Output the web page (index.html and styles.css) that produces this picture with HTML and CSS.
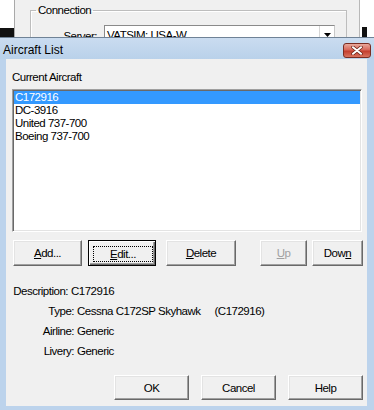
FILE: index.html
```html
<!DOCTYPE html>
<html lang="en">
<head>
    <meta charset="UTF-8">
    <meta name="viewport" content="width=device-width, initial-scale=1.0">
    <title>Aircraft List</title>
    <link rel="stylesheet" href="styles.css">
</head>
<body>
    <!-- window behind the dialog -->
    <div class="desk">
        <div class="desk-left"></div>
        <div class="bgwin">
            <fieldset class="group">
                <legend>Connection</legend>
                <div class="server-row">
                    <span class="server-label">Server:</span>
                    <div class="combo">
                        <span class="combo-text">VATSIM: USA-W</span>
                        <span class="combo-btn">
                            <svg width="7" height="4" viewBox="0 0 7 4"><path d="M0 0h7L3.5 4z" fill="#000"/></svg>
                        </span>
                    </div>
                </div>
            </fieldset>
        </div>
        <div class="desk-right"><span class="desk-block"></span></div>
    </div>

    <div class="dialog">
        <div class="titlebar">
            <span class="title">Aircraft List</span>
            <button class="close-btn" type="button">
                <svg width="12" height="9" viewBox="0 0 12 9">
                    <path d="M2 1.2L10 7.8M10 1.2L2 7.8" stroke="#6a2318" stroke-width="3.4" stroke-linecap="round"/>
                    <path d="M2 1.2L10 7.8M10 1.2L2 7.8" stroke="#fff" stroke-width="2" stroke-linecap="round"/>
                </svg>
            </button>
        </div>

        <div class="client">
            <div class="list-label">Current Aircraft</div>
            <div class="listbox">
                <div class="list-item selected">C172916</div>
                <div class="list-item">DC-3916</div>
                <div class="list-item">United 737-700</div>
                <div class="list-item">Boeing 737-700</div>
            </div>

            <div class="list-buttons">
                <button class="btn btn-add" type="button"><u>A</u>dd...</button>
                <button class="btn btn-edit is-default" type="button"><span class="focus-ring"><u>E</u>dit...</span></button>
                <button class="btn btn-delete" type="button"><u>D</u>elete</button>
                <span class="spacer"></span>
                <button class="btn btn-up" type="button" disabled><u>U</u>p</button>
                <button class="btn btn-down" type="button">Dow<u>n</u></button>
            </div>

            <div class="details">
                <div class="detail-row">
                    <span class="detail-label narrow">Description:</span>
                    <span class="detail-value">C172916</span>
                </div>
                <div class="detail-row">
                    <span class="detail-label">Type:</span>
                    <span class="detail-value">Cessna C172SP Skyhawk<span class="type-code">(C172916)</span></span>
                </div>
                <div class="detail-row">
                    <span class="detail-label">Airline:</span>
                    <span class="detail-value">Generic</span>
                </div>
                <div class="detail-row">
                    <span class="detail-label">Livery:</span>
                    <span class="detail-value">Generic</span>
                </div>
            </div>

            <div class="dialog-buttons">
                <button class="btn btn-main" type="button">OK</button>
                <button class="btn btn-main" type="button">Cancel</button>
                <button class="btn btn-main" type="button">Help</button>
            </div>
        </div>
    </div>
</body>
</html>
```

FILE: styles.css
```css
body {
    margin: 0;
    width: 374px;
    height: 410px;
    overflow: hidden;
    background: #fff;
    font-family: "Liberation Sans", Arial, sans-serif;
    font-size: 11.5px;
    letter-spacing: -0.5px;
    color: #000;
}

/* background window */
.desk {
    display: flex;
    height: 37px;
    overflow: hidden;
}

.desk-left {
    width: 14px;
    box-sizing: border-box;
    background: #fff;
    border-bottom: 9px solid #111;
}

.bgwin {
    width: 346px;
    box-sizing: border-box;
    background: #f0f0f0;
    border-left: 1px solid #a9a9a9;
    border-right: 1px solid #b8b8b8;
}

.desk-right {
    flex: 1;
    background: #fff;
    padding: 27px 0 0 2px;
}

.desk-block {
    display: block;
    width: 5px;
    height: 10px;
    background: #111;
}

.group {
    margin: 4px 12px 0 15px;
    padding: 0;
    border: 1px solid #bdbdbd;
    box-shadow: inset 1px 1px 0 #fff;
    min-width: 0;
}

.group legend {
    margin-left: 5px;
    padding: 0 2px;
    line-height: 13px;
}

.server-row {
    display: flex;
    margin-top: 8px;
}

.server-label {
    width: 66px;
    text-align: right;
    padding-top: 5px;
    margin-right: 7px;
}

.combo {
    display: flex;
    width: 231px;
    height: 22px;
    box-sizing: border-box;
    background: #fff;
    border: 1px solid #8a8a8a;
    border-right-color: #c8c8c8;
}

.combo-text {
    flex: 1;
    padding: 3px 0 0 2px;
}

.combo-btn {
    width: 15px;
    border-left: 1px solid #d6d6d6;
    display: flex;
    justify-content: center;
    padding-top: 7px;
    box-sizing: border-box;
}

/* dialog */
.dialog {
    height: 373px;
    box-sizing: border-box;
    background: #bcd3ec;
    border-top: 1px solid #6f8296;
    display: flex;
    flex-direction: column;
}

.titlebar {
    height: 21px;
    display: flex;
    align-items: center;
    background: linear-gradient(#cadcf0, #b9d1ea);
}

.title {
    flex: 1;
    padding-left: 3px;
    padding-top: 2px;
    font-size: 12px;
    letter-spacing: 0;
}

.close-btn {
    width: 28px;
    height: 15px;
    margin: 4px 3px 0 0;
    padding: 0;
    border: 1px solid #7a2c22;
    border-radius: 3px;
    background: linear-gradient(#e9a99c, #d7675a 45%, #c43e2e 55%, #d8735f);
    display: flex;
    align-items: center;
    justify-content: center;
}

.client {
    height: 347px;
    box-sizing: border-box;
    margin: 0 7px 0 6px;
    padding: 12px 4px 0 6px;
    background: #f0f0f0;
}

.list-label {
    line-height: 13px;
}

.listbox {
    margin-top: 5px;
    width: 350px;
    height: 143px;
    box-sizing: border-box;
    background: #fff;
    border: 1px solid;
    border-color: #a0a0a0 #fff #fff #a0a0a0;
    padding: 1px;
    box-shadow: inset 1px 1px 0 #696969, inset -1px -1px 0 #e3e3e3;
}

.list-item {
    height: 13px;
    line-height: 13px;
    padding-left: 1px;
}

.list-item.selected {
    background: #3399ff;
    color: #fff;
}

/* buttons */
.btn {
    height: 26px;
    padding: 0;
    box-sizing: border-box;
    font: inherit;
    letter-spacing: inherit;
    color: #000;
    background: #f0f0f0;
    border: 1px solid;
    border-color: #fff #696969 #696969 #fff;
    box-shadow: inset -1px -1px 0 #a0a0a0, inset 1px 1px 0 #e3e3e3;
}

.btn:disabled {
    color: #a0a0a0;
}

.btn.is-default {
    border-color: #000;
    box-shadow: inset 1px 1px 0 #fff, inset -1px -1px 0 #696969, inset -2px -2px 0 #a0a0a0;
    display: flex;
    padding: 5px 2px 3px 4px;
}

.focus-ring {
    flex: 1;
    display: flex;
    align-items: center;
    justify-content: center;
    border: 1px dotted #000;
}

.list-buttons {
    display: flex;
    margin-top: 8px;
}

.btn-add { width: 69px; margin-left: 1px; }
.btn-edit { width: 68px; margin-left: 6px; }
.btn-delete { width: 70px; margin-left: 10px; }
.btn-up { width: 47px; }
.btn-down { width: 51px; margin-left: 5px; }

.spacer {
    flex: 1;
}

/* details */
.details {
    margin-top: 15px;
}

.detail-row {
    display: flex;
    height: 20px;
    line-height: 20px;
}

.detail-label {
    width: 68px;
    margin-left: -6px;
    text-align: right;
}

.detail-label.narrow {
    width: 62px;
}

.detail-value {
    margin-left: 3px;
}

.type-code {
    margin-left: 14px;
}

.dialog-buttons {
    display: flex;
    justify-content: flex-end;
    gap: 12px;
    margin-top: 14px;
}

.btn-main {
    width: 75px;
    height: 25px;
}
```
